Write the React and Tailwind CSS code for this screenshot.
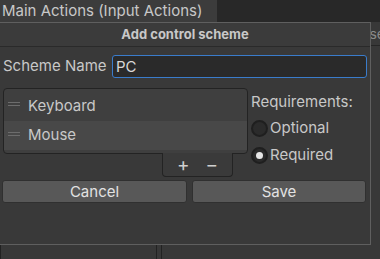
import React from "react";

const font = { fontFamily: "Inter, 'Noto Sans', sans-serif" };

const Handle = () => (
  <div className="flex flex-col gap-[2px] w-[12px] mr-[8px] mt-[-4px]">
    <div className="h-px bg-[#6c6c6c]" />
    <div className="h-px bg-[#6c6c6c]" />
  </div>
);

const Radio = ({ checked, label }) => (
  <div className="flex items-center h-[18px]">
    <div className="w-[17px] h-[17px] rounded-full bg-[#2b2b2b] border-2 border-[#1f1f1f] flex items-center justify-center">
      {checked && <div className="w-[7px] h-[7px] rounded-full bg-[#e6e6e6]" />}
    </div>
    <span className="ml-[2px] text-[15px] text-[#c8c8c8]">{label}</span>
  </div>
);

export default function App() {
  return (
    <div className="relative w-[380px] h-[259px] overflow-hidden bg-[#383838]" style={font}>
      {/* window tab strip */}
      <div className="flex h-[22px] bg-[#282828]">
        <div className="w-[217px] bg-[#3c3c3c] text-[15px] leading-[22px] text-[#c8c8c8] pl-[2px]">
          Main Actions (Input Actions)
        </div>
      </div>
      {/* editor behind the popup */}
      <div className="flex justify-end h-[24px] border-b border-[#262626]">
        <span className="text-[14px] leading-[24px] text-[#8a8a8a] mr-[-5px]">se</span>
      </div>
      <div className="absolute left-0 right-0 top-[245px] bottom-0 flex">
        <div className="w-[157px] border-l border-r border-[#222]" />
        <div className="w-[4px]" />
        <div className="flex-1 border-l border-[#222]" />
      </div>

      {/* popup */}
      <div className="absolute left-[-1px] top-[22px] w-[372px] h-[223px] bg-[#393939] border border-[#5f5f5f] flex flex-col">
        <div className="h-[24px] border-b border-[#2a2a2a] bg-[#3b3b3b] flex items-center justify-center text-[13px] font-bold text-[#c8c8c8]">
          Add control scheme
        </div>
        <div className="flex items-center h-[24px] mt-[7px] pl-[3px] pr-[3px]">
          <span className="text-[15px] text-[#c8c8c8] w-[109px]">Scheme Name</span>
          <div className="flex-1 h-[23px] rounded-[3px] border border-[#3a7ccb] bg-[#2a2a2a] text-[15px] leading-[21px] text-[#d8d8d8] pl-[3px]">
            PC
          </div>
        </div>
        <div className="flex mt-[10px] pl-[3px]">
          <div className="flex flex-col items-end w-[245px]">
            <div className="w-full h-[66px] rounded-[4px] border border-[#232323] bg-[#3f3f3f] pt-[2px]">
              <div className="flex items-center h-[30px] pl-[4px] text-[15px] text-[#c8c8c8]">
                <Handle />
                Keyboard
              </div>
              <div className="flex items-center h-[29px] pl-[4px] bg-[#484848] text-[15px] text-[#c8c8c8]">
                <Handle />
                Mouse
              </div>
            </div>
            <div className="w-[71px] h-[24px] mr-[15px] mt-[-1px] border border-t-0 border-[#232323] rounded-b-[4px] bg-[#3a3a3a] flex items-center justify-around px-[6px] text-[19px] leading-none text-[#cfcfcf]">
              <span>+</span>
              <span>−</span>
            </div>
          </div>
          <div className="ml-[3px] pt-[5px] flex flex-col">
            <span className="text-[15px] text-[#c8c8c8] leading-[18px]">Requirements:</span>
            <div className="mt-[8px] flex flex-col gap-[9px]">
              <Radio label="Optional" />
              <Radio label="Required" checked />
            </div>
          </div>
        </div>
        <div className="flex gap-[5px] mt-[3px] pl-[2px] pr-[4px]">
          <button className="flex-1 h-[23px] rounded-[3px] bg-[#585858] border border-[#303030] text-[15px] text-[#e2e2e2]">
            Cancel
          </button>
          <button className="w-[174px] h-[23px] rounded-[3px] bg-[#585858] border border-[#303030] text-[15px] text-[#e2e2e2]">
            Save
          </button>
        </div>
      </div>
    </div>
  );
}
